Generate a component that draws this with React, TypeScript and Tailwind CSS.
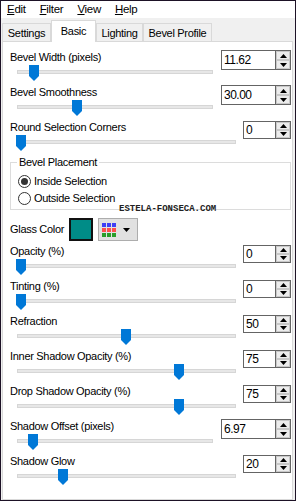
import React from "react";

type Row = { label: string; value: string; pos: number; wide?: boolean };

const topRows: Row[] = [
  { label: "Bevel Width (pixels)", value: "11.62", pos: 34, wide: true },
  { label: "Bevel Smoothness", value: "30.00", pos: 77, wide: true },
  { label: "Round Selection Corners", value: "0", pos: 21 },
];

const bottomRows: Row[] = [
  { label: "Opacity (%)", value: "0", pos: 21 },
  { label: "Tinting (%)", value: "0", pos: 21 },
  { label: "Refraction", value: "50", pos: 126 },
  { label: "Inner Shadow Opacity (%)", value: "75", pos: 179 },
  { label: "Drop Shadow Opacity (%)", value: "75", pos: 179 },
  { label: "Shadow Offset (pixels)", value: "6.97", pos: 33, wide: true },
  { label: "Shadow Glow", value: "20", pos: 63 },
];

function Thumb() {
  return (
    <svg width="10" height="16" viewBox="0 0 10 16">
      <path d="M0 0H10V11L5 16L0 11Z" fill="#0078d7" />
    </svg>
  );
}

function Spin({ value, wide }: { value: string; wide?: boolean }) {
  return (
    <div
      className={
        "flex border border-[#646464] bg-white " +
        (wide ? "w-[70px] h-[20px]" : "w-[48px] h-[18px] mt-px")
      }
    >
      <div className="flex-1 flex items-center pl-[2px] text-[12px] tracking-[-0.5px]">{value}</div>
      <div className="w-[15px] flex flex-col border-l border-[#646464]">
        <div className="flex-1 flex items-center justify-center bg-[#ececec] border border-[#c8c8c8]">
          <svg width="7" height="4" viewBox="0 0 7 4">
            <path d="M0 4L3.5 0L7 4Z" fill="#000" />
          </svg>
        </div>
        <div className="flex-1 flex items-center justify-center bg-[#ececec] border border-[#c8c8c8]">
          <svg width="7" height="4" viewBox="0 0 7 4">
            <path d="M0 0L3.5 4L7 0Z" fill="#000" />
          </svg>
        </div>
      </div>
    </div>
  );
}

function SliderRow({ row }: { row: Row }) {
  return (
    <div className="h-[35px] flex">
      <div className="flex-1 flex flex-col">
        <div className="pl-[7px] h-[14px] leading-[14px]">{row.label}</div>
        <div className={"relative h-[21px] ml-[14px] " + (row.wide ? "w-[196px]" : "w-[219px]")}>
          <div className="mt-[6px] h-[4px] bg-[#e7e7e7] border border-[#d6d6d6]" />
          <div className="absolute top-[1px]" style={{ left: row.pos - 22 }}>
            <Thumb />
          </div>
        </div>
      </div>
      <Spin value={row.value} wide={row.wide} />
    </div>
  );
}

function Radio({ checked, label }: { checked?: boolean; label: string }) {
  return (
    <div className="h-[17px] flex items-center gap-[3px] pl-[7px]">
      <div className="w-[13px] h-[13px] rounded-full border border-[#333] bg-white flex items-center justify-center">
        {checked && <div className="w-[7px] h-[7px] rounded-full bg-[#333]" />}
      </div>
      <span>{label}</span>
    </div>
  );
}

export default function App() {
  const tabs = [
    { name: "Settings", w: "w-[49px]" },
    { name: "Basic", w: "w-[45px]", active: true },
    { name: "Lighting", w: "w-[47px]" },
    { name: "Bevel Profile", w: "w-[69px]" },
  ];
  return (
    <div className="w-[296px] h-[501px] flex flex-col border border-[#1d1226] bg-[#f0f0f0] font-['Liberation_Sans',Arial,sans-serif] text-[11px] tracking-[-0.3px] text-black leading-none">
      <div className="h-[17px] bg-white flex items-center gap-[14px] pl-[6px] text-[11.5px]">
        <span><span className="underline">E</span>dit</span>
        <span><span className="underline">F</span>ilter</span>
        <span><span className="underline">V</span>iew</span>
        <span><span className="underline">H</span>elp</span>
      </div>

      <div className="h-[23px] flex items-end pl-[1px]">
        {tabs.map((t) =>
          t.active ? (
            <div
              key={t.name}
              className={t.w + " h-[22px] -mb-px relative z-10 bg-white border border-b-0 border-[#d9d9d9] flex items-center justify-center"}
            >
              {t.name}
            </div>
          ) : (
            <div
              key={t.name}
              className={t.w + " h-[18px] bg-[#f0f0f0] border border-b-0 border-[#d9d9d9] flex items-center justify-center pt-[1px]"}
            >
              {t.name}
            </div>
          )
        )}
      </div>

      <div className="flex-1 bg-white border border-[#d9d9d9] ml-[1px] mr-[2px] pt-[8px] pr-[1px]">
        {topRows.map((r) => (
          <SliderRow key={r.label} row={r} />
        ))}

        <fieldset className="relative ml-[7px] border border-[#dcdcdc] pb-[2px]">
          <legend className="ml-[6px] px-[2px] h-[14px] leading-[14px]">Bevel Placement</legend>
          <div className="mt-[4px]">
            <Radio checked label="Inside Selection" />
            <Radio label="Outside Selection" />
          </div>
          <div className="absolute left-[108px] bottom-[-5px] font-['Liberation_Mono',monospace] font-bold text-[9px] leading-[9px] tracking-normal text-[#222]">
            ESTELA-FONSECA.COM
          </div>
        </fieldset>

        <div className="mt-[8px] h-[23px] flex items-center pl-[7px]">
          <span className="w-[59px]">Glass Color</span>
          <div className="w-[24px] h-[23px] border-2 border-[#111] bg-[#008c87]" />
          <div className="ml-[5px] w-[40px] h-[23px] bg-[#e1e1e1] border border-[#adadad] flex items-center pl-[3px] gap-[7px]">
            <div className="grid grid-cols-3 gap-[1px]">
              <div className="w-[4px] h-[4px] bg-[#3f3ff5]" />
              <div className="w-[4px] h-[4px] bg-[#3f3ff5]" />
              <div className="w-[4px] h-[4px] bg-[#3f3ff5]" />
              <div className="w-[4px] h-[4px] bg-[#ff4d4d]" />
              <div className="w-[4px] h-[4px] bg-[#ff4d4d]" />
              <div className="w-[4px] h-[4px] bg-[#ff4d4d]" />
              <div className="w-[4px] h-[4px] bg-[#2a9d2a]" />
              <div className="w-[4px] h-[4px] bg-[#2a9d2a]" />
              <div className="w-[4px] h-[4px] bg-[#2a9d2a]" />
            </div>
            <svg width="7" height="4" viewBox="0 0 7 4">
              <path d="M0 0L3.5 4L7 0Z" fill="#000" />
            </svg>
          </div>
        </div>

        <div className="mt-[3px]">
          {bottomRows.map((r) => (
            <SliderRow key={r.label} row={r} />
          ))}
        </div>
      </div>
    </div>
  );
}
